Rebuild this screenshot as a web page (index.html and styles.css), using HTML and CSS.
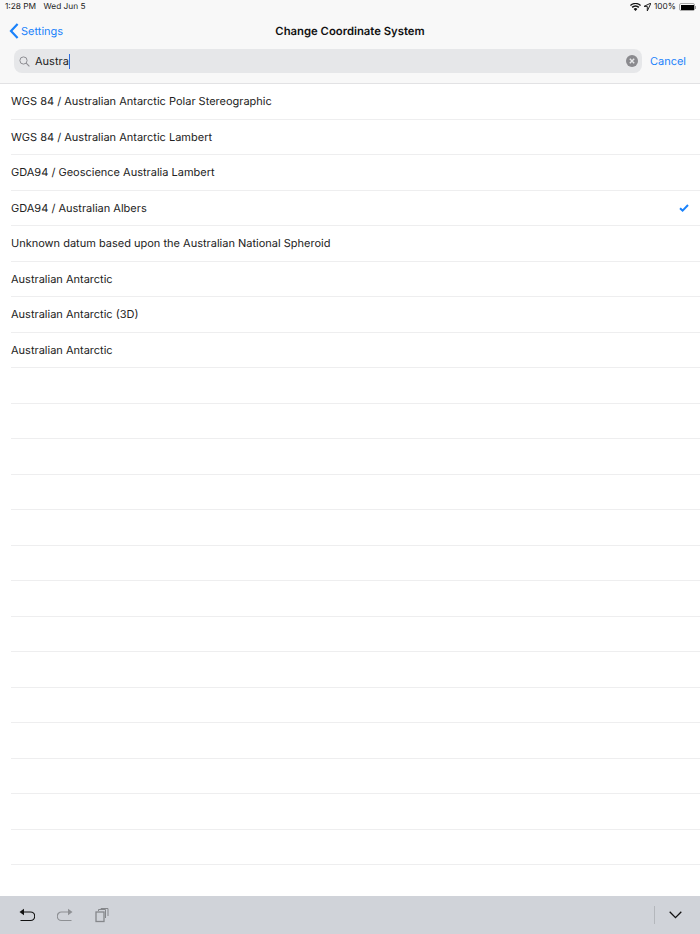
FILE: index.html
```html
<!DOCTYPE html>
<html lang="en">
<head>
  <meta charset="UTF-8">
  <title>Change Coordinate System</title>
  <link rel="stylesheet" href="styles.css">
</head>
<body>
  <header class="top">
    <div class="status">
      <div class="status-left"><span>1:28 PM</span><span>Wed Jun 5</span></div>
      <div class="status-right">
        <svg class="wifi" width="11" height="8" viewBox="0 0 11 8"><path d="M5.5 8 3.6 5.9a2.7 2.7 0 0 1 3.8 0zM2.7 5 1.6 3.8a5.6 5.6 0 0 1 7.8 0L8.3 5a4 4 0 0 0-5.6 0zM.8 3 0 2a8 8 0 0 1 11 0l-.8 1a6.8 6.8 0 0 0-9.4 0z" fill="#111"/></svg>
        <svg class="loc" width="7" height="8" viewBox="0 0 7 8"><path d="M7 0 0 3.4h3.3V8z" fill="none" stroke="#222" stroke-width="1"/></svg>
        <span>100%</span>
        <span class="battery"><span class="battery-fill"></span></span>
        <span class="battery-tip"></span>
      </div>
    </div>
    <div class="nav">
      <a class="back">
        <svg width="10" height="16" viewBox="0 0 10 16"><path d="M8.6 1 2 8l6.600 7" fill="none" stroke="#1a82fb" stroke-width="2.200"/></svg>
        Settings
      </a>
      <h1>Change Coordinate System</h1>
    </div>
    <div class="search-row">
      <div class="search">
        <svg width="11" height="11" viewBox="0 0 11 11"><circle cx="4.5" cy="4.5" r="3.6" fill="none" stroke="#8e8e93"/><path d="m7.2 7.2 3.2 3.2" stroke="#8e8e93" stroke-width="1.1"/></svg>
        <span class="query">Austra</span><span class="caret"></span>
        <span class="clear">
          <svg width="12" height="12" viewBox="0 0 12 12"><circle cx="6" cy="6" r="6" fill="#8a8a8e"/><path d="m3.8 3.8 4.4 4.4m0-4.4L3.8 8.2" stroke="#e6e7e9" stroke-width="1.4"/></svg>
        </span>
      </div>
      <a class="cancel">Cancel</a>
    </div>
  </header>

  <ul class="list">
    <li>WGS 84 / Australian Antarctic Polar Stereographic</li>
    <li>WGS 84 / Australian Antarctic Lambert</li>
    <li>GDA94 / Geoscience Australia Lambert</li>
    <li>GDA94 / Australian Albers
      <svg class="check" width="10" height="8" viewBox="0 0 10 8"><path d="M1 4.2 3.6 6.6 9 1" fill="none" stroke="#1a82fb" stroke-width="2"/></svg>
    </li>
    <li>Unknown datum based upon the Australian National Spheroid</li>
    <li>Australian Antarctic</li>
    <li>Australian Antarctic (3D)</li>
    <li>Australian Antarctic</li>
    <li></li><li></li><li></li><li></li><li></li><li></li><li></li>
    <li></li><li></li><li></li><li></li><li></li><li></li><li></li>
  </ul>

  <footer class="toolbar">
    <div class="tools">
      <svg width="16" height="15" viewBox="0 0 16 15"><path d="M2 4h9.5a3.8 3.8 0 0 1 0 8.5H1.500" fill="none" stroke="#111" stroke-width="1.200"/><path d="M0.500 4 5 .8v6.400z" fill="#111"/></svg>
      <svg width="16" height="15" viewBox="0 0 16 15"><path d="M14 4H4.500a3.800 3.800 0 0 0 0 8.500h10" fill="none" stroke="#8e9094" stroke-width="1.200"/><path d="M15.500 4 11 .8v6.400z" fill="#8e9094"/></svg>
      <svg width="14" height="15" viewBox="0 0 14 15"><rect x="1" y="4" width="8" height="9.500" fill="none" stroke="#85878b" stroke-width="1.300"/><path d="M3.500 3V1.500h7V10M6 1V.5h7V8" fill="none" stroke="#85878b"/></svg>
    </div>
    <div class="tools-right">
      <span class="divider"></span>
      <svg width="13" height="8" viewBox="0 0 13 8"><path d="m.7.8 5.800 5.800L12.300.8" fill="none" stroke="#111" stroke-width="1.300"/></svg>
    </div>
  </footer>
</body>
</html>
```

FILE: styles.css
```css
* {
  margin: 0;
  padding: 0;
  box-sizing: border-box;
}

body {
  width: 700px;
  height: 934px;
  overflow: hidden;
  display: flex;
  flex-direction: column;
  background: #fff;
  font-family: "Inter", "Liberation Sans", sans-serif;
  color: #1c1c1e;
  text-rendering: geometricPrecision;
}

.top {
  height: 84px;
  flex: none;
  background: #f8f8f8;
  border-bottom: 1px solid #e2e2e4;
}

.status {
  height: 14px;
  padding: 0 4px 0 5px;
  display: flex;
  justify-content: space-between;
  align-items: center;
  font-size: 8.300px;
  color: #222;
}

.status-left {
  display: flex;
  gap: 7.500px;
}

.status-right {
  display: flex;
  align-items: center;
  gap: 3px;
}

.battery {
  width: 16px;
  height: 8px;
  padding: 0.500px;
  border: 1px solid #aaa;
  border-radius: 2px;
}

.battery-fill {
  display: block;
  height: 100%;
  background: #000;
}

.battery-tip {
  width: 1px;
  height: 3px;
  background: #999;
  margin-left: -3px;
}

.nav {
  height: 34px;
  position: relative;
  display: flex;
  align-items: center;
  justify-content: center;
}

.nav h1 {
  font-size: 11.300px;
  font-weight: 600;
  color: #111;
}

.back {
  position: absolute;
  left: 9px;
  top: 9px;
  display: flex;
  align-items: center;
  gap: 2px;
  font-size: 11px;
  color: #1a82fb;
}

.search-row {
  display: flex;
  align-items: center;
  padding: 1px 14px 0 14px;
  gap: 8px;
}

.search {
  flex: 1;
  height: 24px;
  background: #e6e7e9;
  border-radius: 8px;
  display: flex;
  align-items: center;
  padding: 0 4px 0 5px;
  font-size: 11px;
  color: #222;
}

.query {
  margin-left: 5px;
}

.caret {
  width: 1.500px;
  height: 15px;
  background: #2f6fe0;
}

.clear {
  margin-left: auto;
  display: flex;
}

.cancel {
  font-size: 11px;
  color: #1a82fb;
}

.list {
  list-style: none;
  padding-left: 11px;
  flex: 1;
  min-height: 0;
}

.list li {
  height: 35.500px;
  display: flex;
  align-items: center;
  justify-content: space-between;
  padding-right: 11px;
  border-bottom: 1px solid #eeeeef;
  font-size: 11px;
  color: #222;
}

.toolbar {
  height: 38px;
  flex: none;
  background: #d0d3d9;
  display: flex;
  justify-content: space-between;
  align-items: center;
  padding: 0 18px 0 19px;
}

.tools {
  display: flex;
  align-items: center;
  gap: 22px;
}

.tools-right {
  display: flex;
  align-items: center;
  gap: 14px;
}

.divider {
  width: 1.500px;
  height: 18px;
  background: #b4b7bc;
}
```
